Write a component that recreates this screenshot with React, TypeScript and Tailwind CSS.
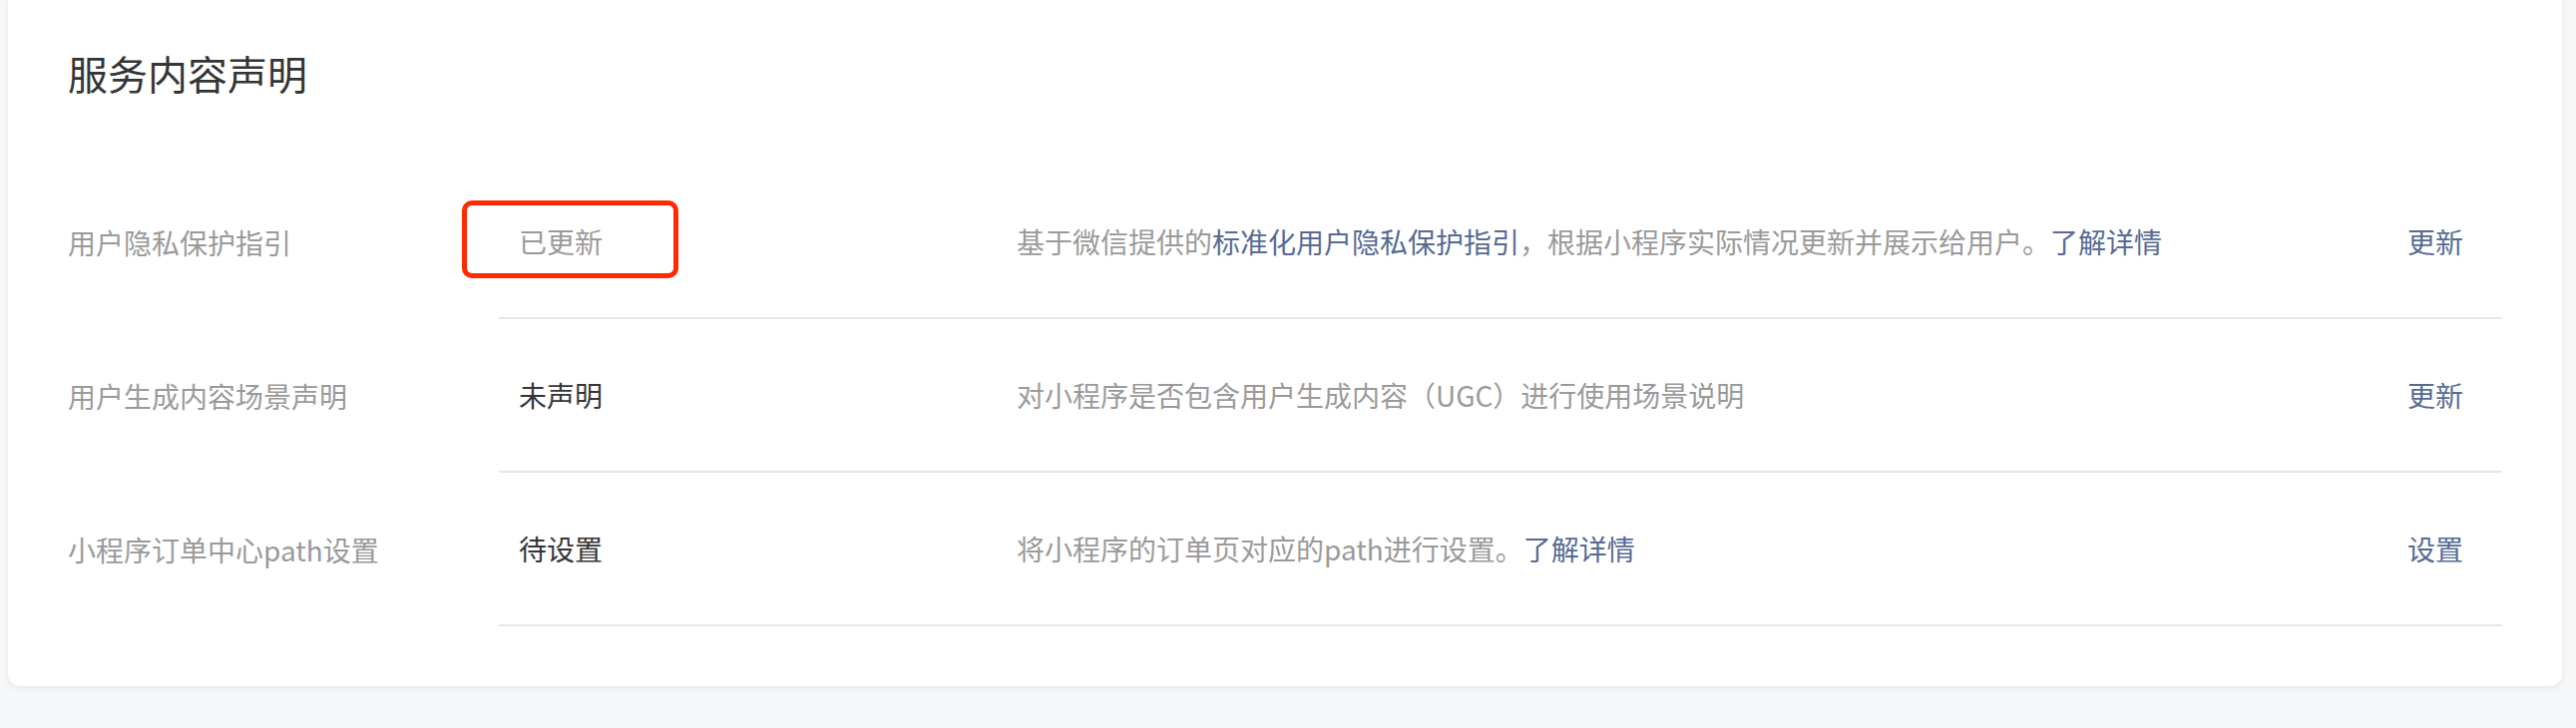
import type { ReactNode } from 'react'

type Row = {
  label: string
  status: string
  statusMuted?: boolean
  desc: ReactNode
  action: string
}

const Link = ({ children }: { children: ReactNode }) => (
  <span className="text-[#576b95] cursor-pointer">{children}</span>
)

const rows: Row[] = [
  {
    label: '用户隐私保护指引',
    status: '已更新',
    statusMuted: true,
    desc: (
      <>
        基于微信提供的<Link>标准化用户隐私保护指引</Link>，根据小程序实际情况更新并展示给用户。<Link>了解详情</Link>
      </>
    ),
    action: '更新',
  },
  {
    label: '用户生成内容场景声明',
    status: '未声明',
    desc: <>对小程序是否包含用户生成内容（UGC）进行使用场景说明</>,
    action: '更新',
  },
  {
    label: '小程序订单中心path设置',
    status: '待设置',
    desc: (
      <>
        将小程序的订单页对应的path进行设置。<Link>了解详情</Link>
      </>
    ),
    action: '设置',
  },
]

const App = () => {
  return (
    <div className="min-h-screen bg-[#f6f7f9] pl-2 pr-[14px] font-['Noto_Sans_CJK_SC','Noto_Sans',sans-serif]">
      <div className="bg-white rounded-b-[12px] shadow-[0_2px_6px_rgba(0,0,0,0.07)] pl-[60px] pr-[60px] pt-[45px] pb-[60px]">
        <h2 className="text-[40px] leading-[56px] font-normal text-[#353535]">服务内容声明</h2>

        <div className="mt-[65px]">
          {rows.map((row, i) => (
            <div key={row.label} className="relative flex text-[28px] leading-[40px]">
              <div className="w-[432px] flex items-center text-[#9a9a9a]">{row.label}</div>
              <div className="flex-1 h-[154px] flex items-center border-b-2 border-[#e7e7eb]">
                <div
                  className={
                    row.statusMuted
                      ? 'w-[519px] pl-[20px] text-[#9a9a9a]'
                      : 'w-[519px] pl-[20px] text-[#353535]'
                  }
                >
                  {row.status}
                </div>
                <div className="flex-1 text-[#9a9a9a]">{row.desc}</div>
                <div className="pr-[39px] text-[#576b95] cursor-pointer">{row.action}</div>
              </div>

              {/* red highlight box around the first status */}
              {i === 0 && (
                <div className="absolute left-[395px] top-[35px] w-[217px] h-[78px] border-[5px] border-[#ff2a00] rounded-[10px] pointer-events-none" />
              )}
            </div>
          ))}
        </div>
      </div>
    </div>
  )
}

export default App
